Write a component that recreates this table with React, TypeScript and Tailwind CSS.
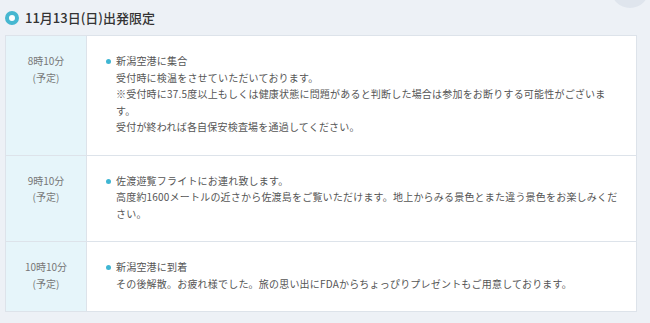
const rows = [
  {
    time: "8時10分",
    title: "新潟空港に集合",
    lines: [
      "受付時に検温をさせていただいております。",
      "※受付時に37.5度以上もしくは健康状態に問題があると判断した場合は参加をお断りする可能性がございます。",
      "受付が終われば各自保安検査場を通過してください。",
    ],
  },
  {
    time: "9時10分",
    title: "佐渡遊覧フライトにお連れ致します。",
    lines: [
      "高度約1600メートルの近さから佐渡島をご覧いただけます。地上からみる景色とまた違う景色をお楽しみください。",
    ],
  },
  {
    time: "10時10分",
    title: "新潟空港に到着",
    lines: ["その後解散。お疲れ様でした。旅の思い出にFDAからちょっぴりプレゼントもご用意しております。"],
  },
];

export default function App() {
  return (
    <div
      className="relative w-[650px] h-[323px] overflow-hidden bg-[#edf1f6]"
      style={{ fontFamily: '"Noto Sans CJK JP", "Noto Sans", sans-serif' }}
    >
      <div className="absolute left-[611px] top-[-30px] w-[38px] h-[38px] rounded-full bg-[#dfe5ed]" />

      <div className="flex items-center h-[35px] pl-[5px] pt-[1px]">
        <span className="w-[14px] h-[14px] rounded-full border-[4.5px] border-[#46b7d0] bg-white" />
        <h2 className="ml-[6px] text-[13px] font-medium text-[#333]">11月13日(日)出発限定</h2>
      </div>

      <div className="ml-[5px] w-[632px] border border-[#dde3ea] bg-white">
        {rows.map((row, i) => (
          <div
            key={row.time}
            className={`flex text-[10px] leading-[16.5px] ${i < rows.length - 1 ? "border-b border-[#dde3ea]" : ""}`}
          >
            <div className="w-[81px] shrink-0 bg-[#e6f5fa] border-r border-[#dde3ea] pt-[17px] pb-[19px] text-center text-[#777]">
              <div>{row.time}</div>
              <div>(予定)</div>
            </div>
            <div className="flex-1 pl-[19px] pr-[16px] pt-[17px] pb-[19px] text-[#555] tracking-[0.2px]">
              <div className="flex">
                <span className="w-[10px] shrink-0 pt-[6px]">
                  <span className="block w-[5px] h-[5px] rounded-full bg-[#3fb6d3]" />
                </span>
                <div>
                  <p>{row.title}</p>
                  {row.lines.map((line) => (
                    <p key={line}>{line}</p>
                  ))}
                </div>
              </div>
            </div>
          </div>
        ))}
      </div>
    </div>
  );
}
